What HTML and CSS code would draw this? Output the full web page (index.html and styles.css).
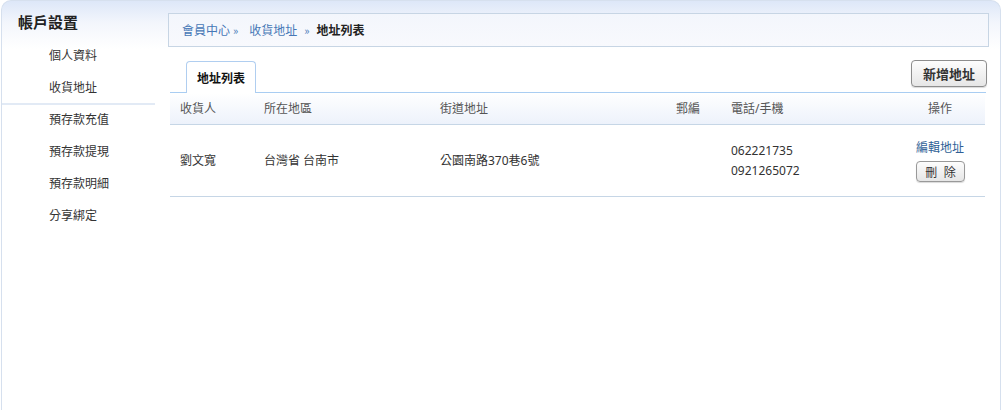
FILE: index.html
```html
<!DOCTYPE html>
<html lang="zh-Hant">
<head>
<meta charset="utf-8">
<title>地址列表</title>
<link rel="stylesheet" href="styles.css">
</head>
<body>
<div class="panel">
  <aside class="sidebar">
    <div class="side-title">帳戶設置</div>
    <ul class="side-menu">
      <li class="side-item">個人資料</li>
      <li class="side-item active">收貨地址</li>
      <li class="side-item">預存款充值</li>
      <li class="side-item">預存款提現</li>
      <li class="side-item">預存款明細</li>
      <li class="side-item">分享綁定</li>
    </ul>
  </aside>
  <main class="content">
    <div class="crumbs"><a class="crumb-link">會員中心</a><span class="sep">»</span><a class="crumb-link">收貨地址</a><span class="sep sep2">»</span><strong class="crumb-cur">地址列表</strong></div>
    <div class="tabbar">
      <div class="tab">地址列表</div>
      <button class="btn btn-add">新增地址</button>
    </div>
    <table class="addr">
      <colgroup>
        <col class="c1"><col class="c2"><col class="c3"><col class="c4"><col class="c5"><col class="c6">
      </colgroup>
      <thead>
        <tr>
          <th>收貨人</th>
          <th>所在地區</th>
          <th>街道地址</th>
          <th>郵編</th>
          <th>電話/手機</th>
          <th class="ops">操作</th>
        </tr>
      </thead>
      <tbody>
        <tr>
          <td>劉文寬</td>
          <td>台灣省 台南市</td>
          <td>公園南路370巷6號</td>
          <td></td>
          <td class="phones">062221735<br>0921265072</td>
          <td class="ops">
            <a class="edit">編輯地址</a>
            <button class="btn btn-del">刪 除</button>
          </td>
        </tr>
      </tbody>
    </table>
  </main>
</div>
</body>
</html>
```

FILE: styles.css
```css
* { box-sizing: border-box; }
html, body { margin: 0; padding: 0; background: #fff; }
body {
  font-family: "Noto Sans", "Noto Sans CJK TC", sans-serif;
  font-size: 12px;
  color: #333;
}
.panel {
  margin-left: 1px;
  width: 1000px;
  height: 430px;
  border: 1px solid #d6e0ee;
  border-bottom: none;
  border-radius: 10px 10px 0 0;
  background: linear-gradient(to bottom, #dde7f8 0px, #f3f6fc 22px, #ffffff 48px, #ffffff 100%);
  display: flex;
}
.sidebar {
  width: 153px;
  flex: none;
}
.side-title {
  font-family: "Noto Sans CJK TC", sans-serif;
  font-size: 15px;
  font-weight: bold;
  color: #222;
  line-height: 30px;
  padding: 6px 0 0 16px;
  height: 38px;
}
.side-menu { list-style: none; margin: 0; padding: 0; }
.side-item {
  font-family: "Noto Sans CJK TC", sans-serif;
  height: 32px;
  line-height: 32px;
  padding-left: 47px;
  font-size: 12px;
  color: #333;
}
.side-item.active { box-shadow: 0 2px 0 #e2eaf5; position: relative; }
.content {
  flex: 1;
  padding: 12px 11px 0 13px;
}
.crumbs {
  height: 34px;
  border: 1px solid #c7d5e4;
  background: linear-gradient(to bottom, #f3f6fc, #f8f9fd);
  padding-left: 13px;
  line-height: 32px;
  font-family: "Noto Sans CJK TC", sans-serif;
  font-size: 12px;
}
.crumb-link { color: #4677b6; }
.sep { color: #4677b6; margin: 0 11px 0 3px; font-size: 11px; }
.sep2 { margin: 0 7px 0 7px; }
.crumb-cur { color: #222; }
.tabbar {
  margin: 13px 3px 0 2px;
  display: flex;
  align-items: flex-end;
  justify-content: space-between;
  border-bottom: 1px solid #a9cdf2;
}
.tab {
  margin-left: 16px;
  margin-bottom: -1px;
  width: 70px;
  height: 32px;
  border: 1px solid #b0cef0;
  border-bottom: none;
  border-radius: 4px 4px 0 0;
  background: #fff;
  text-align: center;
  line-height: 32px;
  font-family: "Noto Sans CJK TC", sans-serif;
  font-weight: bold;
  font-size: 12px;
  color: #111;
}
.btn {
  font-family: "Noto Sans CJK TC", sans-serif;
  border: 1px solid #8d8d8d;
  border-radius: 4px;
  background: linear-gradient(to bottom, #fdfdfd, #e6e6e6);
  box-shadow: 0 1px 1px rgba(0,0,0,0.15);
  color: #333;
  padding: 0;
  cursor: pointer;
}
.btn-add {
  width: 76px;
  height: 27px;
  margin-bottom: 5px;
  margin-right: -1px;
  font-size: 13px;
  font-weight: bold;
}
.addr {
  margin: 0 3px 0 2px;
  width: 815px;
  border-collapse: collapse;
  table-layout: fixed;
  font-family: "Noto Sans", "Noto Sans CJK TC", sans-serif;
}
.c1 { width: 84px; }
.c2 { width: 176px; }
.c3 { width: 236px; }
.c4 { width: 55px; }
.c5 { width: 174px; }
.c6 { width: 90px; }
.addr th {
  height: 31px;
  padding: 0 0 0 10px;
  text-align: left;
  font-weight: normal;
  color: #555;
  background: linear-gradient(to bottom, #ffffff, #edf2fb);
  border-bottom: 1px solid #c6d6e6;
}
.addr td {
  height: 72px;
  padding: 0 0 0 10px;
  border-bottom: 1px solid #c6d6e6;
  color: #333;
  vertical-align: middle;
}
.addr .ops { text-align: center; padding: 0; }
.phones { line-height: 20px; padding-top: 2px !important; }
.edit {
  display: block;
  color: #2f5f96;
  line-height: 18px;
  margin-top: 0;
}
.btn-del {
  display: block;
  margin: 4px 0 0 21px;
  width: 49px;
  height: 21px;
  font-size: 12px;
  letter-spacing: 2px;
  text-indent: 2px;
  color: #333;
  border-color: #999;
}
```
